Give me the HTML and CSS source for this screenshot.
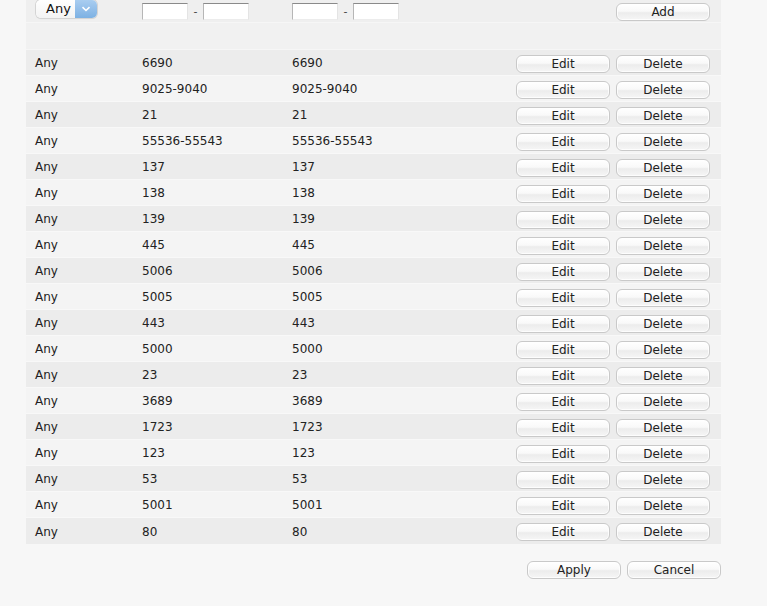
FILE: index.html
```html
<!DOCTYPE html>
<html>
<head>
<meta charset="utf-8">
<link rel="stylesheet" href="styles.css">
</head>
<body>
<div class="page">
  <div class="panel">
    <div class="form-row">
      <div class="c1">
        <div class="select"><span class="select-label">Any</span><span class="select-arrow"><svg width="10" height="6" viewBox="0 0 10 6"><path d="M1.5 1.2 L5 4.5 L8.5 1.2" fill="none" stroke="#fff" stroke-width="1.6"/></svg></span></div>
      </div>
      <div class="c2"><span class="field"></span><span class="dash">-</span><span class="field"></span></div>
      <div class="c3"><span class="field"></span><span class="dash">-</span><span class="field"></span></div>
      <div class="actions"><span></span><button class="btn">Add</button></div>
    </div>
    <div class="spacer"></div>
    <div class="rows">
      <div class="row"><div class="c1">Any</div><div class="c2">6690</div><div class="c3">6690</div><div class="actions"><button class="btn">Edit</button><button class="btn">Delete</button></div></div>
      <div class="row"><div class="c1">Any</div><div class="c2">9025-9040</div><div class="c3">9025-9040</div><div class="actions"><button class="btn">Edit</button><button class="btn">Delete</button></div></div>
      <div class="row"><div class="c1">Any</div><div class="c2">21</div><div class="c3">21</div><div class="actions"><button class="btn">Edit</button><button class="btn">Delete</button></div></div>
      <div class="row"><div class="c1">Any</div><div class="c2">55536-55543</div><div class="c3">55536-55543</div><div class="actions"><button class="btn">Edit</button><button class="btn">Delete</button></div></div>
      <div class="row"><div class="c1">Any</div><div class="c2">137</div><div class="c3">137</div><div class="actions"><button class="btn">Edit</button><button class="btn">Delete</button></div></div>
      <div class="row"><div class="c1">Any</div><div class="c2">138</div><div class="c3">138</div><div class="actions"><button class="btn">Edit</button><button class="btn">Delete</button></div></div>
      <div class="row"><div class="c1">Any</div><div class="c2">139</div><div class="c3">139</div><div class="actions"><button class="btn">Edit</button><button class="btn">Delete</button></div></div>
      <div class="row"><div class="c1">Any</div><div class="c2">445</div><div class="c3">445</div><div class="actions"><button class="btn">Edit</button><button class="btn">Delete</button></div></div>
      <div class="row"><div class="c1">Any</div><div class="c2">5006</div><div class="c3">5006</div><div class="actions"><button class="btn">Edit</button><button class="btn">Delete</button></div></div>
      <div class="row"><div class="c1">Any</div><div class="c2">5005</div><div class="c3">5005</div><div class="actions"><button class="btn">Edit</button><button class="btn">Delete</button></div></div>
      <div class="row"><div class="c1">Any</div><div class="c2">443</div><div class="c3">443</div><div class="actions"><button class="btn">Edit</button><button class="btn">Delete</button></div></div>
      <div class="row"><div class="c1">Any</div><div class="c2">5000</div><div class="c3">5000</div><div class="actions"><button class="btn">Edit</button><button class="btn">Delete</button></div></div>
      <div class="row"><div class="c1">Any</div><div class="c2">23</div><div class="c3">23</div><div class="actions"><button class="btn">Edit</button><button class="btn">Delete</button></div></div>
      <div class="row"><div class="c1">Any</div><div class="c2">3689</div><div class="c3">3689</div><div class="actions"><button class="btn">Edit</button><button class="btn">Delete</button></div></div>
      <div class="row"><div class="c1">Any</div><div class="c2">1723</div><div class="c3">1723</div><div class="actions"><button class="btn">Edit</button><button class="btn">Delete</button></div></div>
      <div class="row"><div class="c1">Any</div><div class="c2">123</div><div class="c3">123</div><div class="actions"><button class="btn">Edit</button><button class="btn">Delete</button></div></div>
      <div class="row"><div class="c1">Any</div><div class="c2">53</div><div class="c3">53</div><div class="actions"><button class="btn">Edit</button><button class="btn">Delete</button></div></div>
      <div class="row"><div class="c1">Any</div><div class="c2">5001</div><div class="c3">5001</div><div class="actions"><button class="btn">Edit</button><button class="btn">Delete</button></div></div>
      <div class="row"><div class="c1">Any</div><div class="c2">80</div><div class="c3">80</div><div class="actions"><button class="btn">Edit</button><button class="btn">Delete</button></div></div>
    </div>
  </div>
  <div class="footer">
    <button class="btn">Apply</button>
    <button class="btn">Cancel</button>
  </div>
</div>
</body>
</html>
```
FILE: styles.css
```css
html, body {
  margin: 0;
  padding: 0;
  background: #f7f7f7;
}

body {
  font-family: "DejaVu Sans", Verdana, sans-serif;
  font-size: 12px;
  color: #222;
}

.page {
  width: 767px;
  height: 606px;
  overflow: hidden;
}

.panel {
  margin-left: 26px;
  width: 695px;
  background: #f0f0f0;
}

.form-row,
.row {
  display: grid;
  grid-template-columns: 107px 150px 1fr 194px;
  padding: 0 11px 0 9px;
}

.form-row {
  height: 22px;
  align-items: start;
  background: #efefef;
  border-bottom: 1px solid #f6f6f6;
}

.spacer {
  height: 26px;
  background: #f1f1f1;
  border-bottom: 1px solid #f6f6f6;
}

.row {
  align-items: center;
  padding-top: 1px;
  box-sizing: border-box;
  height: 26px;
  border-bottom: 1px solid #f8f8f8;
  background: #ececec;
}

.row:nth-child(even) {
  background: #f4f4f4;
}

.row:last-child {
  border-bottom: none;
}

.form-row .c1 {
  padding-left: 1px;
}

.form-row .c2,
.form-row .c3 {
  display: flex;
  align-items: center;
  padding-top: 3px;
}

.actions {
  display: grid;
  grid-template-columns: 94px 94px;
  column-gap: 6px;
}

.row .actions {
  align-self: start;
  padding-top: 4px;
}

.form-row .actions {
  padding-top: 3px;
}

/* drop-down: plain label with a blue arrow cap */
.select {
  display: flex;
  width: 61px;
  height: 18px;
  border-radius: 5px;
  overflow: hidden;
  box-shadow: 0 0 0 1px #d4d4d4, 0 1px 1px rgba(0, 0, 0, 0.08);
  background: #fff;
}

.select-label {
  flex: 1;
  line-height: 18px;
  font-size: 13px;
  padding-left: 10px;
  color: #111;
  background: linear-gradient(#ffffff, #f3f3f3);
}

.select-arrow {
  width: 22px;
  display: flex;
  align-items: center;
  justify-content: center;
  background: linear-gradient(#a9cdf0, #7db1e3);
}

.field {
  display: inline-block;
  width: 44px;
  height: 15px;
  background: #fff;
  border-top: 1px solid #8a8a8a;
  border-left: 1px solid #b6b6b6;
  border-right: 1px solid #e4e4e4;
  border-bottom: 1px solid #ececec;
}

.dash {
  display: inline-block;
  width: 15px;
  text-align: center;
  color: #444;
  font-size: 11px;
}

.btn {
  font-family: "DejaVu Sans", Verdana, sans-serif;
  font-size: 12px;
  color: #222;
  height: 18px;
  padding: 1px 0 0;
  margin: 0;
  border: 1px solid #c9c9c9;
  border-radius: 6px;
  background: linear-gradient(#ffffff 0%, #f9f9f9 45%, #ececec 55%, #f6f6f6 100%);
  box-shadow: inset 0 0 0 1px rgba(255, 255, 255, 0.8);
  line-height: 15px;
  width: 94px;
}

.footer {
  display: flex;
  justify-content: flex-end;
  gap: 6px;
  width: 721px;
  padding-top: 17px;
}
```
